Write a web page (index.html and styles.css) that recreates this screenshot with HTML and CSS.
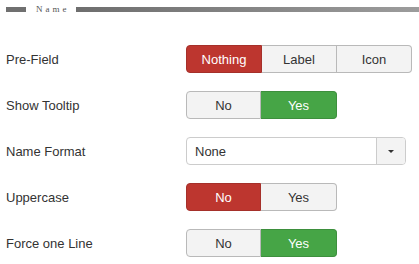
FILE: index.html
```html
<!DOCTYPE html>
<html>
<head>
<meta charset="utf-8">
<link rel="stylesheet" href="styles.css">
</head>
<body>
<div class="legend">
  <span class="bar-left"></span>
  <span class="legend-text">Name</span>
  <span class="bar-right"></span>
</div>
<div class="form">
  <div class="row">
    <div class="label">Pre-Field</div>
    <div class="group g3">
      <span class="btn red">Nothing</span>
      <span class="btn">Label</span>
      <span class="btn">Icon</span>
    </div>
  </div>
  <div class="row">
    <div class="label">Show Tooltip</div>
    <div class="group g2">
      <span class="btn">No</span>
      <span class="btn green">Yes</span>
    </div>
  </div>
  <div class="row">
    <div class="label">Name Format</div>
    <div class="select">
      <span class="select-value">None</span>
      <span class="select-arrow"><span class="caret"></span></span>
    </div>
  </div>
  <div class="row">
    <div class="label">Uppercase</div>
    <div class="group g2">
      <span class="btn red">No</span>
      <span class="btn">Yes</span>
    </div>
  </div>
  <div class="row">
    <div class="label">Force one Line</div>
    <div class="group g2">
      <span class="btn">No</span>
      <span class="btn green">Yes</span>
    </div>
  </div>
</div>
</body>
</html>
```
FILE: styles.css
```css
html, body {
  margin: 0;
  padding: 0;
  background: #fff;
}
body {
  font-family: "Liberation Sans", Arial, sans-serif;
  font-size: 13px;
  color: #333;
  width: 419px;
  height: 264px;
  overflow: hidden;
}
.legend {
  display: flex;
  align-items: center;
  height: 19px;
  padding-left: 6px;
}
.bar-left {
  width: 20px;
  height: 5px;
  background: #707070;
}
.legend-text {
  font-family: "Liberation Serif", "Times New Roman", serif;
  font-size: 9px;
  letter-spacing: 3px;
  color: #555;
  margin-left: 10px;
  width: 40px;
  line-height: 9px;
}
.bar-right {
  flex: 1;
  height: 5px;
  background: linear-gradient(to right, #6e6e6e, #9c9c9c);
}
.form {
  display: flex;
  flex-direction: column;
  gap: 18px;
  padding-top: 26px;
  padding-left: 6px;
}
.row {
  display: flex;
  align-items: center;
  height: 28px;
}
.label {
  width: 180px;
  flex: none;
}
.group {
  display: flex;
  height: 28px;
}
.btn {
  box-sizing: border-box;
  display: flex;
  align-items: center;
  justify-content: center;
  width: 75px;
  height: 28px;
  background: #f3f3f3;
  border: 1px solid #b9b9b9;
  border-left-width: 0;
  color: #333;
}
.btn:first-child {
  border-left-width: 1px;
  border-radius: 4px 0 0 4px;
}
.btn:last-child {
  border-radius: 0 4px 4px 0;
}
.g3 .btn:first-child { width: 76px; }
.g3 .btn:nth-child(2) { width: 75px; }
.g3 .btn:last-child { width: 75px; }
.g2 .btn:first-child { width: 75px; }
.g2 .btn:last-child { width: 76px; }
.btn.red {
  background: #bd362f;
  border-color: #a5302a;
  color: #fff;
}
.btn.green {
  background: #46a546;
  border-color: #3d8f3d;
  color: #fff;
}
.select {
  box-sizing: border-box;
  display: flex;
  width: 220px;
  height: 28px;
  border: 1px solid #ccc;
  border-radius: 4px;
  background: #fff;
  overflow: hidden;
}
.select-value {
  flex: 1;
  display: flex;
  align-items: center;
  padding-left: 8px;
}
.select-arrow {
  width: 28px;
  display: flex;
  align-items: center;
  justify-content: center;
  background: #f3f3f3;
  border-left: 1px solid #ccc;
}
.caret {
  width: 0;
  height: 0;
  border-left: 3.5px solid transparent;
  border-right: 3.5px solid transparent;
  border-top: 3.5px solid #333;
}
```
